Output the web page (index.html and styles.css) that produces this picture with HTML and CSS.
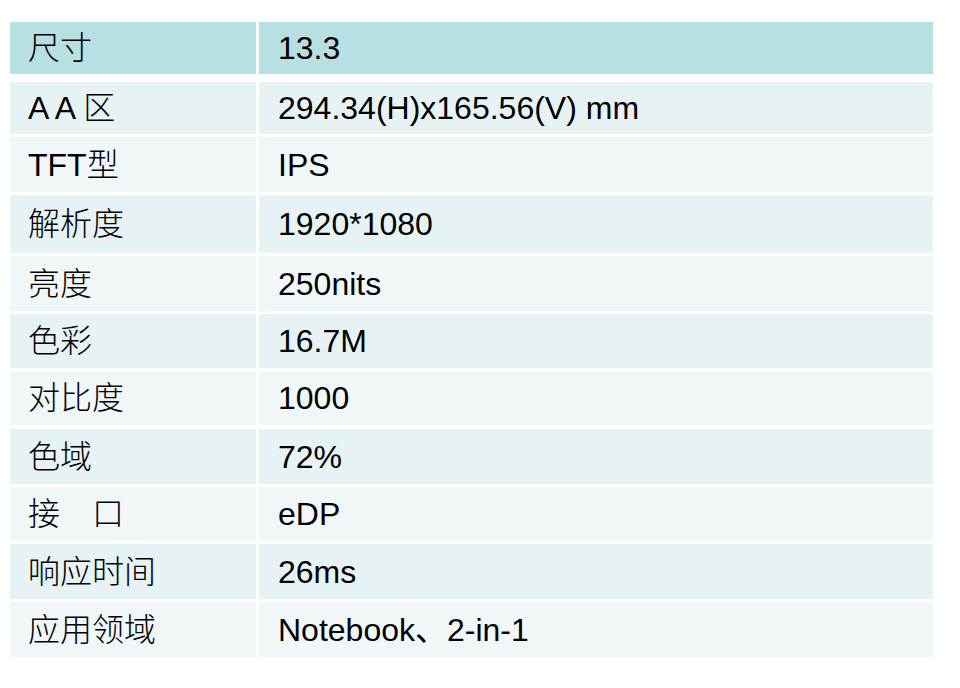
FILE: index.html
```html
<!DOCTYPE html>
<html lang="zh-CN">
<head>
<meta charset="utf-8">
<title>规格</title>
<link rel="stylesheet" href="styles.css">
</head>
<body>
<div class="spec">
  <div class="row head"><div class="cell key">尺寸</div><div class="cell val">13.3</div></div>
  <div class="row dark h52"><div class="cell key">A A 区</div><div class="cell val">294.34(H)x165.56(V) mm</div></div>
  <div class="row light h55"><div class="cell key">TFT型</div><div class="cell val">IPS</div></div>
  <div class="row dark h58"><div class="cell key">解析度</div><div class="cell val">1920*1080</div></div>
  <div class="row light h55"><div class="cell key">亮度</div><div class="cell val">250nits</div></div>
  <div class="row dark h54"><div class="cell key">色彩</div><div class="cell val">16.7M</div></div>
  <div class="row light h54"><div class="cell key">对比度</div><div class="cell val">1000</div></div>
  <div class="row dark h55 gapped"><div class="cell key">色域</div><div class="cell val">72%</div></div>
  <div class="row light h54"><div class="cell key">接　口</div><div class="cell val">eDP</div></div>
  <div class="row dark h55"><div class="cell key">响应时间</div><div class="cell val">26ms</div></div>
  <div class="row light h55"><div class="cell key">应用领域</div><div class="cell val">Notebook、2-in-1</div></div>
</div>
</body>
</html>
```

FILE: styles.css
```css
html, body {
  margin: 0;
  padding: 0;
  background: #ffffff;
}

body {
  font-family: "Liberation Sans", Arial, "Noto Sans CJK SC", sans-serif;
  color: #000000;
}

.spec {
  display: flex;
  flex-direction: column;
  gap: 3px;
  width: 923px;
  margin: 22px 0 0 10px;
}

.row {
  display: grid;
  grid-template-columns: 246px 674px;
  column-gap: 3px;
  height: 55px;
}

.row.head { height: 52px; margin-bottom: 5px; }
.row.h52 { height: 52px; }
.row.h54 { height: 54px; }
.row.h55 { height: 55px; }
.row.h58 { height: 58px; }
.row.gapped { margin-top: 1px; }

.cell {
  display: flex;
  align-items: center;
  font-size: 32px;
  line-height: 1;
  white-space: pre;
}

.key {
  padding-left: 18px;
  font-weight: 300;
}

.val {
  padding-left: 19px;
}

.head .cell { background: #b8dfe2; }
.dark .cell { background: #e6f2f3; }
.light .cell { background: #f1f7f9; }
```
